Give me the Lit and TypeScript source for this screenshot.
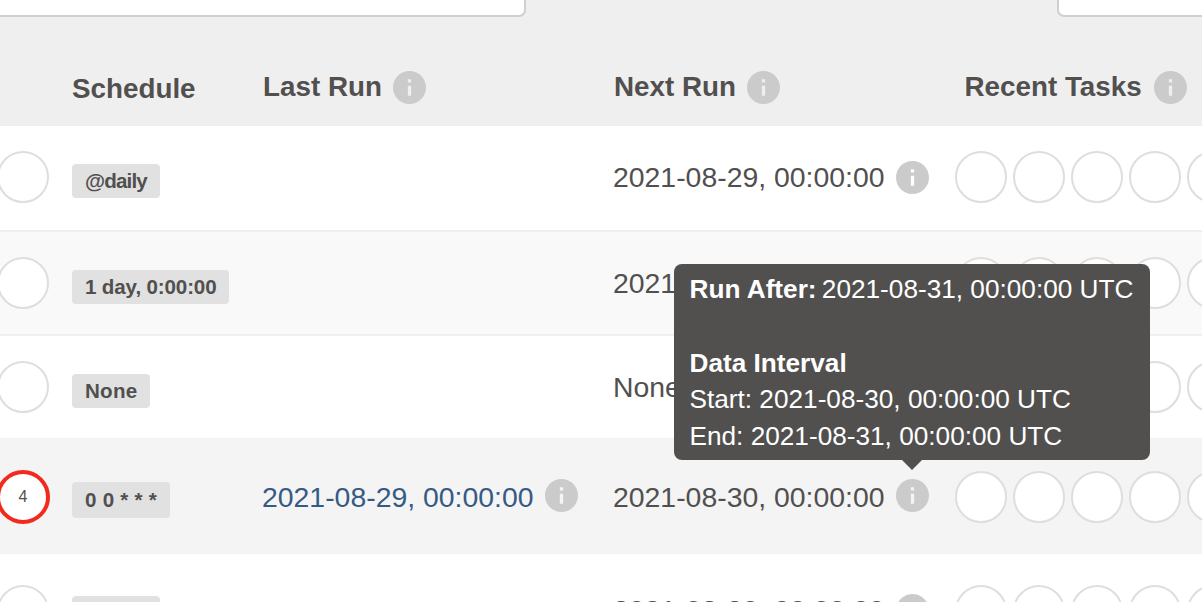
import { LitElement, css, html } from "lit";
import { customElement } from "lit/decorators.js";

const info = () => html`<svg class="info" viewBox="2 2 20 20" aria-hidden="true"><path fill-rule="evenodd" d="M12 2C6.48 2 2 6.48 2 12s4.48 10 10 10 10-4.48 10-10S17.52 2 12 2zm1 15h-2v-6h2v6zm0-8h-2V7h2v2z"/></svg>`;

interface Row {
  cls: string;
  schedule: string;
  last?: string;
  next: string;
  nextInfo: boolean;
  hovered?: boolean;
}

const rows: Row[] = [
  { cls: "r1", schedule: "@daily", next: "2021-08-29, 00:00:00", nextInfo: true },
  { cls: "r2", schedule: "1 day, 0:00:00", next: "2021-08-29, 00:00:00", nextInfo: true },
  { cls: "r3", schedule: "None", next: "None", nextInfo: false },
  { cls: "r4", schedule: "0 0 * * *", last: "2021-08-29, 00:00:00", next: "2021-08-30, 00:00:00", nextInfo: true, hovered: true },
  { cls: "r5", schedule: "@daily", next: "2021-08-30, 00:00:00", nextInfo: true },
];

@customElement("app-root")
export class AppRoot extends LitElement {
  static styles = css`
    :host {
      display: block;
      width: 1202px;
      height: 602px;
      overflow: hidden;
      background: #fff;
      font-family: "Liberation Sans", Arial, sans-serif;
      color: #51504f;
    }
    .head {
      height: 126px;
      background: #efefef;
      display: flex;
      flex-direction: column;
    }
    .filters {
      display: flex;
      justify-content: space-between;
      height: 17px;
    }
    .input {
      background: #fff;
      border: 2px solid #cfcfcf;
      border-top: 0;
      box-sizing: border-box;
      height: 17px;
    }
    .input.a {
      width: 526px;
      border-left: 0;
      border-bottom-right-radius: 7px;
    }
    .input.b {
      width: 145px;
      border-right: 0;
      border-bottom-left-radius: 7px;
    }
    .cols {
      display: grid;
      grid-template-columns: 72px 191px 350px 342px minmax(0, 1fr);
    }
    .headcols {
      flex: 1;
      align-items: center;
      padding-top: 31px;
      font-size: 27.8px;
      font-weight: 700;
      line-height: 34px;
    }
    .th {
      display: flex;
      align-items: center;
      gap: 11px;
      white-space: nowrap;
    }
    .th.sched {
      padding-top: 4px;
    }
    .th.recent {
      padding-left: 9.5px;
      gap: 12px;
    }
    .th.next {
      padding-left: 1px;
    }
    .info {
      display: block;
      width: 33px;
      height: 33px;
      flex: none;
      fill: #cbcbcb;
    }
    .row {
      box-sizing: border-box;
      border-bottom: 2px solid #efefef;
      align-items: center;
      overflow: hidden;
    }
    .row.hovered {
      overflow: visible;
    }
    .r1 { height: 106px; padding-bottom: 2px; }
    .r2 { height: 104px; background: #f9f9f9; }
    .r3 { height: 102px; border-bottom: 0; }
    .r4 { height: 116px; background: #f4f4f4; border-bottom: 0; padding-top: 2px; }
    .r4 .info { margin-bottom: 3px; }
    .r5 { height: 60px; align-items: start; padding-top: 31px; }
    .r5 .nextcol { padding-top: 8px; }
    .circle {
      box-sizing: border-box;
      width: 52px;
      height: 52px;
      flex: none;
      border: 2px solid #dedede;
      border-radius: 50%;
      background: #fff;
    }
    .cell {
      display: flex;
      align-items: center;
      white-space: nowrap;
      font-size: 28.4px;
      line-height: 34px;
    }
    .first {
      margin-left: -3px;
    }
    .active {
      margin-left: -4px;
      width: 54px;
      height: 54px;
      border: 4px solid #f02b1d;
      display: flex;
      align-items: center;
      justify-content: center;
      font-size: 16px;
      color: #51504f;
    }
    .badge {
      margin-top: 7px;
      background: #e1e1e1;
      border-radius: 4px;
      padding: 0 13px;
      height: 34px;
      display: flex;
      align-items: center;
      font-size: 20.6px;
      font-weight: 700;
      line-height: 34px;
      white-space: nowrap;
    }
    .r1 .badge,
    .r5 .badge {
      letter-spacing: -0.85px;
    }
    .r2 .badge {
      letter-spacing: -0.15px;
    }
    .r3 .badge {
      letter-spacing: 0.25px;
    }
    .r4 .badge {
      height: 36px;
      margin-top: 5px;
      letter-spacing: 0.25px;
    }
    .r5 .badge {
      margin-top: 11px;
    }
    .link {
      color: #365a84;
      margin-left: -1px;
    }
    .withinfo {
      gap: 11px;
    }
    .anchor {
      position: relative;
      display: block;
    }
    .tasks {
      display: flex;
      gap: 6px;
    }
    .tip {
      position: absolute;
      left: -222px;
      bottom: 55px;
      width: 476px;
      height: 196px;
      box-sizing: border-box;
      padding: 7px 16px;
      background: #51504f;
      border-radius: 8px;
      color: #fff;
      font-size: 26.2px;
      line-height: 36.4px;
      z-index: 2;
    }
    .tip::after {
      content: "";
      position: absolute;
      left: 228px;
      top: 100%;
      border-left: 10px solid transparent;
      border-right: 10px solid transparent;
      border-top: 10px solid #51504f;
    }
    .tip b {
      font-weight: 700;
    }
    .tip .lead {
      margin-right: -2px;
    }
    .tip .line {
      height: 36.4px;
    }
    .tip .blank {
      height: 37.6px;
    }
  `;

  private circles() {
    return html`<div class="tasks">
      ${[0, 1, 2, 3, 4].map(() => html`<div class="circle"></div>`)}
    </div>`;
  }

  private tooltip() {
    return html`<div class="tip">
      <div class="line"><b class="lead">Run After:</b> 2021-08-31, 00:00:00 UTC</div>
      <div class="blank"></div>
      <div class="line"><b>Data Interval</b></div>
      <div class="line">Start: 2021-08-30, 00:00:00 UTC</div>
      <div class="line">End: 2021-08-31, 00:00:00 UTC</div>
    </div>`;
  }

  render() {
    return html`
      <div class="head">
        <div class="filters">
          <div class="input a"></div>
          <div class="input b"></div>
        </div>
        <div class="cols headcols">
          <div></div>
          <div class="th sched">Schedule</div>
          <div class="th">Last Run ${info()}</div>
          <div class="th next">Next Run ${info()}</div>
          <div class="th recent">Recent Tasks ${info()}</div>
        </div>
      </div>
      ${rows.map(
        (r) => html`<div class="cols row ${r.cls} ${r.hovered ? "hovered" : ""}">
          <div class="cell">
            ${r.hovered
              ? html`<div class="circle active">4</div>`
              : html`<div class="circle first"></div>`}
          </div>
          <div class="cell"><span class="badge">${r.schedule}</span></div>
          <div class="cell withinfo">
            ${r.last ? html`<span class="link">${r.last}</span>${info()}` : ""}
          </div>
          <div class="cell withinfo nextcol">
            <span>${r.next}</span>
            ${r.nextInfo
              ? html`<span class="anchor">${info()}${r.hovered ? this.tooltip() : ""}</span>`
              : ""}
          </div>
          ${this.circles()}
        </div>`
      )}
    `;
  }
}
